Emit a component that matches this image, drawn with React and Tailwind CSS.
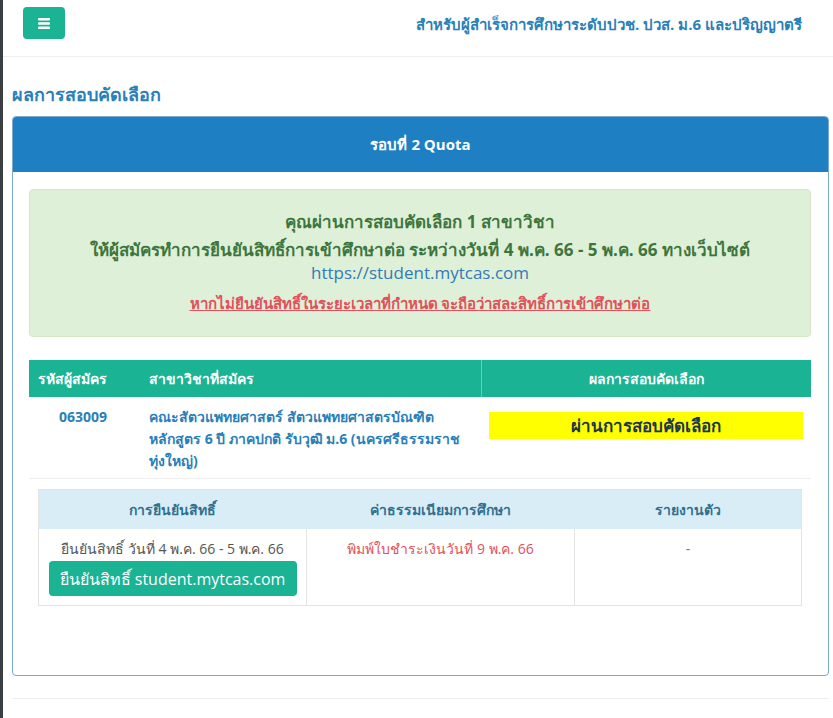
import React from 'react';

const Navbar = () => (
    <div className="h-[57px] border-b border-[#eeeeee] flex items-center justify-between pl-[20px] pr-[31px]">
        <button className="w-[42px] h-[32px] mb-[10px] rounded-[4px] bg-[#1ab394] flex items-center justify-center">
            <svg width="12" height="11" viewBox="0 0 12 11">
                <rect x="0" y="0" width="12" height="2.4" rx="1" fill="#fff" />
                <rect x="0" y="4.3" width="12" height="2.4" rx="1" fill="#fff" />
                <rect x="0" y="8.6" width="12" height="2.4" rx="1" fill="#fff" />
            </svg>
        </button>
        <span className="text-[15px] font-bold text-[#2a7fb8] mb-[8px]">
            สำหรับผู้สำเร็จการศึกษาระดับปวช. ปวส. ม.6 และปริญญาตรี
        </span>
    </div>
);

const AlertBox = () => (
    <div className="bg-[#dff0d8] rounded-[4px] border border-[#d6e9c6] pt-[18px] pb-[22px] text-center">
        <div className="text-[17px] font-bold text-[#3c763d] leading-[28px]">คุณผ่านการสอบคัดเลือก 1 สาขาวิชา</div>
        <div className="text-[17px] font-bold text-[#3c763d] leading-[24px] mt-[2px]">
            ให้ผู้สมัครทำการยืนยันสิทธิ์การเข้าศึกษาต่อ ระหว่างวันที่ 4 พ.ค. 66 - 5 พ.ค. 66 ทางเว็บไซต์
        </div>
        <div className="text-[17px] text-[#337ab7] leading-[22px]">https://student.mytcas.com</div>
        <div className="mt-[8px] text-[15px] font-bold text-[#e0525b] underline leading-[22px]">
            หากไม่ยืนยันสิทธิ์ในระยะเวลาที่กำหนด จะถือว่าสละสิทธิ์การเข้าศึกษาต่อ
        </div>
    </div>
);

const ResultTable = () => (
    <div>
        <div className="grid grid-cols-[108px_344px_1fr] bg-[#1ab394] text-white text-[14px] font-bold h-[37px]">
            <div className="flex items-center pl-[9px]">รหัสผู้สมัคร</div>
            <div className="flex items-center pl-[12px]">สาขาวิชาที่สมัคร</div>
            <div className="flex items-center justify-center border-l border-[#5fd0b6]">ผลการสอบคัดเลือก</div>
        </div>
        <div className="grid grid-cols-[108px_344px_1fr] border-b border-[#eeeeee] pb-[6px]">
            <div className="text-center pt-[9px] text-[14px] font-bold text-[#2a7fb8] leading-[22px]">063009</div>
            <div className="pl-[12px] pt-[9px] text-[14px] font-bold text-[#2a7fb8] leading-[22px]">
                คณะสัตวแพทยศาสตร์ สัตวแพทยศาสตรบัณฑิต หลักสูตร 6 ปี ภาคปกติ รับวุฒิ ม.6 (นครศรีธรรมราช ทุ่งใหญ่)
            </div>
            <div className="px-[8px] pt-[15px]">
                <div className="bg-[#ffff00] h-[27px] flex items-center justify-center text-[17px] font-bold text-[#1c3550]">
                    ผ่านการสอบคัดเลือก
                </div>
            </div>
        </div>
    </div>
);

const ConfirmTable = () => (
    <div className="mx-[9px] mt-[10px] border border-[#e4e4e4]">
        <div className="grid grid-cols-[267px_268px_1fr] bg-[#d9edf7] text-[14px] font-bold text-[#31708f] h-[39px]">
            <div className="flex items-center justify-center">การยืนยันสิทธิ์</div>
            <div className="flex items-center justify-center">ค่าธรรมเนียมการศึกษา</div>
            <div className="flex items-center justify-center">รายงานตัว</div>
        </div>
        <div className="grid grid-cols-[267px_268px_1fr] h-[76px]">
            <div className="flex flex-col items-center pt-[9px]">
                <div className="text-[14px] text-[#555555] leading-[22px]">ยืนยันสิทธิ์ วันที่ 4 พ.ค. 66 - 5 พ.ค. 66</div>
                <button className="mt-[1px] w-[248px] h-[35px] rounded-[4px] bg-[#1ab394] text-white text-[16px]">
                    ยืนยันสิทธิ์ student.mytcas.com
                </button>
            </div>
            <div className="border-l border-[#e4e4e4] text-center pt-[9px] text-[14px] text-[#e0525b] leading-[22px]">
                พิมพ์ใบชำระเงินวันที่ 9 พ.ค. 66
            </div>
            <div className="border-l border-[#e4e4e4] text-center pt-[9px] text-[14px] text-[#777777] leading-[22px]">-</div>
        </div>
    </div>
);

export default function App() {
    return (
        <div className="min-h-[718px] bg-white border-l-[3px] border-[#3a3f44] font-['Open_Sans','Noto_Sans',sans-serif]">
            <Navbar />
            <div className="pl-[9px] pr-[4px]">
                <h2 className="mt-[25px] text-[18px] font-bold text-[#2a7fb8] leading-[24px]">ผลการสอบคัดเลือก</h2>
                <div className="mt-[10px] border border-[#7fa9c9] rounded-[4px] overflow-hidden">
                    <div className="h-[55px] bg-[#1e80c3] flex items-center justify-center text-white text-[15px] font-bold">
                        รอบที่ 2 Quota
                    </div>
                    <div className="pl-[16px] pr-[17px] pt-[17px] pb-[69px]">
                        <AlertBox />
                        <div className="mt-[23px]">
                            <ResultTable />
                            <ConfirmTable />
                        </div>
                    </div>
                </div>
                <div className="mt-[22px] border-t border-[#eeeeee]" />
            </div>
        </div>
    );
}
